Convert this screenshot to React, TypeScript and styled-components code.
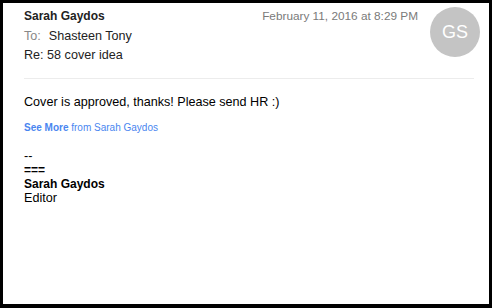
import React from "react";
import styled, { createGlobalStyle } from "styled-components";

const Global = createGlobalStyle`
  html, body { margin: 0; padding: 0; background: #000; }
  body { font-family: "Liberation Sans", Arial, Helvetica, sans-serif; }
`;

const Frame = styled.div`
  box-sizing: border-box;
  width: 492px;
  height: 308px;
  border-style: solid;
  border-color: #000;
  border-width: 3px 3px 4px 3px;
  background: #fff;
  padding: 4px 9px 0 21px;
`;

const Header = styled.div`
  display: flex;
  justify-content: space-between;
  align-items: flex-start;
  padding-bottom: 14px;
  margin-right: 6px;
  border-bottom: 1px solid #ececec;
`;

const Meta = styled.div`
  display: flex;
  flex-direction: column;
  font-size: 12.6px;
  line-height: 18px;
  color: #222;
`;

const From = styled.div`
  font-weight: bold;
  font-size: 12px;
  color: #222;
`;

const ToLine = styled.div`
  margin-top: 2px;
  line-height: 19px;
`;

const Label = styled.span`
  color: #888;
  margin-right: 8px;
`;

const Right = styled.div`
  display: flex;
  gap: 12px;
  align-items: flex-start;
  margin-right: -6px;
`;

const DateText = styled.div`
  font-size: 11.8px;
  line-height: 18px;
  color: #7a7a7a;
`;

const Avatar = styled.div`
  width: 50px;
  height: 50px;
  border-radius: 50%;
  background: #c4c4c4;
  color: #fff;
  font-size: 18px;
  display: flex;
  align-items: center;
  justify-content: center;
`;

const Body = styled.div`
  padding-top: 16px;
  font-size: 12.6px;
  line-height: 14px;
  color: #000;
`;

const Para = styled.p<{ $gap?: number }>`
  margin: 0 0 ${(p) => p.$gap ?? 0}px 0;
`;

const SeeMore = styled.div`
  font-size: 10px;
  line-height: 14px;
  color: #4a86f0;
  margin-bottom: 14px;
`;

const Strong = styled.span`
  font-weight: bold;
  font-size: 12px;
`;

const SeeMoreStrong = styled.span`
  font-weight: bold;
`;

export default function App() {
  return (
    <>
      <Global />
      <Frame>
        <Header>
          <Meta>
            <From>Sarah Gaydos</From>
            <ToLine>
              <Label>To:</Label>Shasteen Tony
            </ToLine>
            <div>Re: 58 cover idea</div>
          </Meta>
          <Right>
            <DateText>February 11, 2016 at 8:29 PM</DateText>
            <Avatar>GS</Avatar>
          </Right>
        </Header>
        <Body>
          <Para $gap={12}>Cover is approved, thanks! Please send HR :)</Para>
          <SeeMore>
            <SeeMoreStrong>See More</SeeMoreStrong> from Sarah Gaydos
          </SeeMore>
          <Para>--</Para>
          <Para>
            <Strong>===</Strong>
          </Para>
          <Para>
            <Strong>Sarah Gaydos</Strong>
          </Para>
          <Para>Editor</Para>
        </Body>
      </Frame>
    </>
  );
}
